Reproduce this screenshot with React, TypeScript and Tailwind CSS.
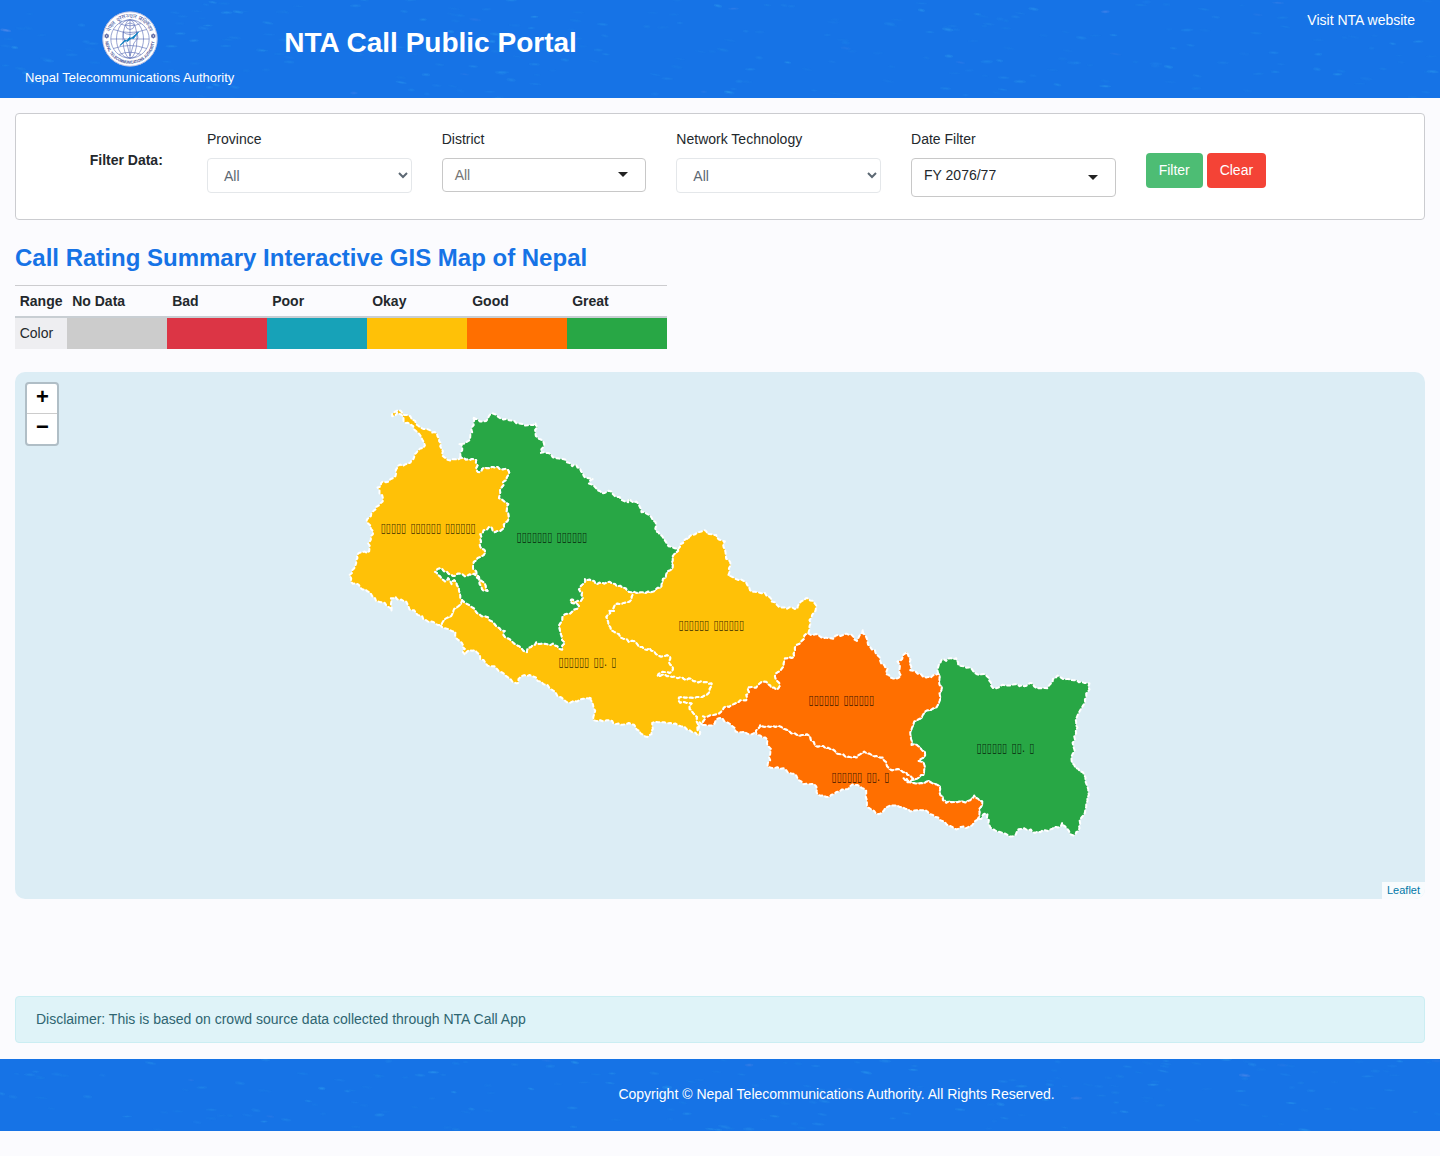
import React from "react";

type Point = [number, number];

/** Reads a traced outline drawn at three times map size, offset by its sheet's origin. */
function trace(originX: number, originY: number, data: string): Point[] {
  return data
    .trim()
    .split(/\s+/)
    .map((pair) => {
      const [x, y] = pair.split(",").map(Number);
      return [originX + 0.2 + x / 3, originY + 0.2 + y / 3] as Point;
    });
}

/** Adds small ragged steps between the vertices of a border. */
function roughen(points: Point[]): Point[] {
  const out: Point[] = [];
  points.forEach((p, i) => {
    out.push(p);
    const next = points[i + 1];
    if (!next) return;
    const dx = next[0] - p[0];
    const dy = next[1] - p[1];
    const k = Math.sin(p[0] * 12.9898 + p[1] * 78.233) * 0.22;
    out.push([p[0] + dx / 2 - dy * k, p[1] + dy / 2 + dx * k]);
  });
  return out;
}

const border = (x: number, y: number, data: string) => roughen(trace(x, y, data));
const back = (points: Point[]) => [...points].reverse();

const westOuter = border(
  340,
  400,
  "361,170 354,178 338,177 322,179 313,172 306,160 304,146 303,130 296,115 290,100 276,97 262,87 240,82 228,72 215,58 200,44 186,38 173,30 160,38 156,48 164,46 170,37 180,42 190,54 195,68 210,72 222,88 236,100 246,118 254,136 240,145 228,158 222,170 214,180 204,190 190,196 180,193 172,202 168,218 158,234 146,244 128,244 122,256 112,262 118,280 128,294 120,310 108,320 100,332 92,348 80,358 84,370 92,386 98,402 92,418 84,430 88,444 80,458 66,456 50,466 48,480 46,496 36,510 27,525 32,545 46,550 60,562 76,568 88,576 96,588 108,604 122,606 134,608 144,620 154,632 152,612 152,594 166,590 176,600 190,602 202,612 208,628 222,630 232,644 246,648 258,660 272,664 286,670 300,674"
);
const westLumbini = border(340, 400, "300,674 306,668 322,652 338,636 352,620 366,600");
const westKarnali = border(
  340,
  400,
  "366,600 360,586 356,570 350,556 342,540 334,552 324,534 314,544 304,536 292,524 284,515 292,506 306,506 320,514 334,524 346,526 360,520 374,528 388,522 402,520 410,532 418,544 424,558 430,572 442,572 436,556 426,544 416,530 408,514 398,494 408,480 420,470 436,456 424,446 418,432 420,416 420,402 430,390 446,380 456,384 464,396 480,392 492,382 496,366 504,358 504,340 500,326 504,312 492,304 476,294 480,278 484,262 488,246 498,240 504,224 504,210 488,208 472,200 456,200 440,204 426,206 418,216 410,212 412,196 408,180 396,176 384,178 372,174 361,170"
);
const karnaliOuter = border(
  450,
  400,
  "31,170 36,150 34,134 26,132 44,130 52,124 60,112 66,96 66,80 70,68 68,50 84,58 96,64 108,62 116,48 128,40 144,50 160,58 176,60 192,62 208,70 224,76 240,74 256,68 262,80 256,100 262,112 272,118 282,132 274,146 272,158 288,158 302,162 318,174 336,176 350,186 366,198 378,194 390,206 398,220 404,232 428,236 416,250 430,256 442,270 456,280 468,276 484,274 494,288 508,290 524,304 534,306 540,296 548,306 558,304 568,318 574,336 588,340 598,344 608,360 618,376 618,394 628,402 640,414 650,430 664,440 684,446"
);
const karnaliGandaki = border(
  450,
  400,
  "684,446 684,452 672,462 668,480 668,496 660,510 648,522 638,536 634,552 630,562 616,568 602,576 586,578 572,576 558,578 545,576"
);
const karnaliLumbini = border(
  450,
  400,
  "545,576 532,572 518,562 500,558 486,550 470,546 456,548 440,552 432,542 418,538 404,536 400,550 386,568 396,576 398,592 392,602 376,606 368,598 360,602 372,610 386,618 372,628 360,640 344,642 336,660 326,676 330,694 334,708 344,728 336,748 322,738 308,730 292,732 276,730 258,726 246,736 238,742 230,756 214,744 198,734 184,722 172,714 160,704 164,692 148,684 132,670 118,660 104,648 88,642 76,632 64,620 48,610 36,600"
);
const lumbiniOuter = border(
  430,
  570,
  "30,164 44,174 60,180 76,186 78,204 88,212 98,224 104,236 98,246 104,254 116,240 134,240 144,250 150,268 166,278 182,288 200,296 214,306 228,318 242,328 256,338 264,338 274,318 290,318 306,318 322,332 340,342 358,354 376,366 394,382 410,396 430,392 450,388 468,384 482,380 486,396 490,412 492,432 490,450 510,450 530,450 546,452 556,462 572,464 588,462 604,462 616,470 628,482 640,494 652,500 664,492 668,476 666,458 684,456 702,456 720,458 736,460 752,468 770,478 786,486 802,496"
);
const lumbiniGandaki = border(
  430,
  570,
  "802,496 810,486 802,480 804,464 800,440 788,428 778,416 784,400 768,398 750,398 746,382 764,382 782,382 800,380 816,380 832,372 838,356 844,340 830,336 812,334 796,334 784,326 768,330 756,322 742,324 726,320 710,318 696,314 682,318 690,308 706,306 718,308 728,296 720,284 716,272 720,260 702,258 684,256 672,244 658,234 642,238 626,230 614,214 596,216 580,206 566,192 550,184 540,170 534,156 528,140 540,128 536,120 552,122 552,108 562,100 580,98 598,94 604,80 605,66"
);
const gandakiOuter = border(
  600,
  520,
  "234,86 240,72 252,60 266,56 274,44 290,38 304,34 314,30 320,40 334,42 348,44 356,58 374,64 370,80 376,96 378,116 390,126 386,144 384,166 400,172 416,180 430,182 440,192 448,204 454,214 474,216 494,218 508,230 514,244 530,254 546,262 560,266 576,262 592,264 598,250 612,240 624,234 638,242 648,256 646,272 636,284 628,300 628,318 624,340"
);
const gandakiBagmati = border(
  600,
  520,
  "624,340 612,346 604,362 588,374 584,392 582,410 566,410 554,414 550,430 544,446 532,456 524,468 530,482 538,498 528,508 512,502 504,492 490,484 478,490 468,502 454,500 442,502 446,516 438,524 438,540 420,540 408,548 394,554 378,558 368,568 356,580 340,584 324,588 308,588 314,596 308,604"
);
const gandakiSouth = border(600, 520, "308,604 304,612 298,606 296,622 292,646");
const bagmatiSouth = border(
  600,
  520,
  "308,604 308,614 322,616 336,616 346,602 356,594 368,596 380,606 396,618 406,634 424,636 440,640 456,642 468,640"
);
const bagmatiMadhesh = border(
  690,
  620,
  "198,340 202,326 210,314 224,320 240,320 256,320 274,320 288,328 304,340 320,344 336,344 350,342 362,360 374,376 390,378 406,384 420,386 434,392 450,402 466,410 484,412 500,412 510,402 522,394 538,400 552,408 564,410 578,412 588,426 598,446 614,448 632,450 648,456 660,466 672,478"
);
const bagmatiOuter = border(
  690,
  620,
  "354,40 370,44 386,46 400,54 414,54 430,56 442,44 460,44 476,44 490,50 500,62 508,46 518,28 526,46 532,64 540,80 554,90 560,104 570,122 582,134 592,146 588,162 600,172 616,176 632,166 628,148 622,124 636,116 650,96 656,110 658,128 660,150 676,154 692,162 708,172 722,172 734,162 744,160"
);
const bagmatiEast = border(
  690,
  620,
  "744,160 748,176 748,194 754,210 750,230 744,252 730,264 712,270 698,284 684,298 668,316 660,336 662,354 664,374 680,374 692,386 704,396 700,412 684,422 700,428 702,446 700,464 688,470 672,478"
);
const eastMadhesh = border(
  860,
  640,
  "162,418 150,424 140,416 130,414 142,426 156,428 176,430 192,430 206,422 218,430 232,434 240,448 240,464 248,480 258,488 274,486 290,486 306,484 324,482 334,476 342,466 354,476 366,484 362,500 358,516 352,538"
);
const eastOuter = border(
  860,
  640,
  "234,100 234,80 240,70 246,56 258,62 272,54 288,54 294,66 296,76 312,78 326,82 340,94 350,102 364,102 380,108 386,120 392,136 408,144 420,138 436,136 452,136 466,132 478,138 492,138 504,132 518,130 530,144 546,144 562,144 572,130 578,116 592,106 608,116 624,116 640,120 656,126 672,128 688,130 688,148 678,160 674,178 670,194 660,210 650,230 648,246 652,262 648,280 644,298 640,320 638,340 634,358 642,374 654,386 668,396 676,412 678,430 684,446 686,464 682,482 678,500 674,518 664,532 660,550 658,564 648,576 640,586 626,572 614,558 606,548 594,562 582,560 570,568 554,570 540,576 524,578 512,568 498,568 484,566 470,574 458,588 442,584 428,578 410,574 396,566 388,556 386,540 382,522 370,522 364,536 352,538"
);
const madheshOuter = [
  ...border(
    860,
    640,
    "352,538 340,550 328,558 316,564 302,560 288,568 276,560 260,554 246,542 234,532 218,524 202,514 186,510 170,510 150,514 136,506 118,500 100,496 82,500 72,510 56,522 42,512 28,504 20,496"
  ),
  ...border(
    690,
    620,
    "530,540 528,520 522,506 508,498 496,494 480,498 464,508 448,514 432,522 418,530 400,526 382,522 380,508 372,492 356,492 340,492 326,480 318,466 304,460 288,450 270,446 252,444 232,438 240,420 240,402 242,386 230,370 226,352 210,346 198,340"
  ),
];

const YELLOW = "#ffc107";
const GREEN = "#28a745";
const ORANGE = "#ff6f00";

type Province = {
  name: string;
  /** Label words, each with its left edge and drawn width. */
  words: [string, number, number][];
  y: number;
  fill: string;
  ring: Point[];
};

const SIX = "▯▯▯▯▯▯";

const provinces: Province[] = [
  {
    name: "प्रदेश नं. १",
    words: [[SIX, 976.6, 30.6], ["▯▯.", 1011.4, 13.6], ["▯", 1029.2, 5.1]],
    y: 748,
    fill: GREEN,
    ring: [...eastOuter, ...back(eastMadhesh), ...back(bagmatiEast)],
  },
  {
    name: "प्रदेश नं. २",
    words: [[SIX, 831.6, 30.6], ["▯▯.", 866.4, 13.6], ["▯", 884.2, 5.1]],
    y: 777,
    fill: ORANGE,
    ring: [...madheshOuter, ...bagmatiMadhesh, ...eastMadhesh],
  },
  {
    name: "वागमती प्रदेश",
    words: [[SIX, 808.6, 30.6], [SIX, 843.4, 30.6]],
    y: 700,
    fill: ORANGE,
    ring: [...bagmatiOuter, ...bagmatiEast, ...back(bagmatiMadhesh), ...back(bagmatiSouth), ...back(gandakiBagmati)],
  },
  {
    name: "गण्डकी प्रदेश",
    words: [[SIX, 678.6, 30.6], [SIX, 713.4, 30.6]],
    y: 625,
    fill: YELLOW,
    ring: [...gandakiOuter, ...gandakiBagmati, ...gandakiSouth, ...lumbiniGandaki, ...back(karnaliGandaki)],
  },
  {
    name: "प्रदेश नं. ५",
    words: [[SIX, 558.6, 30.6], ["▯▯.", 593.4, 13.6], ["▯", 611.2, 5.1]],
    y: 662,
    fill: YELLOW,
    ring: [...lumbiniOuter, ...lumbiniGandaki, ...karnaliLumbini, ...back(westLumbini)],
  },
  {
    name: "कर्णाली प्रदेश",
    words: [["▯▯▯▯▯▯▯", 516.6, 35.7], [SIX, 556.6, 30.6]],
    y: 537,
    fill: GREEN,
    ring: [...karnaliOuter, ...karnaliGandaki, ...karnaliLumbini, ...westKarnali],
  },
  {
    name: "सुदूर पश्चिम प्रदेश",
    words: [["▯▯▯▯▯", 380.7, 25.5], [SIX, 410.4, 30.6], [SIX, 445, 30.6]],
    y: 528,
    fill: YELLOW,
    ring: [...westOuter, ...westLumbini, ...westKarnali],
  },
];

const toPath = (ring: Point[]) => "M" + ring.map(([x, y]) => `${x.toFixed(1)} ${y.toFixed(1)}`).join("L") + "Z";

/** Faint ripples over the blue bands. */
function Ripples({ height, seed }: { height: number; seed: number }) {
  const rand = (n: number) => {
    const v = Math.sin(n * 127.1 + seed * 311.7) * 43758.5453;
    return v - Math.floor(v);
  };
  const count = Math.round(height * 3);
  return (
    <svg className="pointer-events-none absolute inset-0 h-full w-full" viewBox={`0 0 1440 ${height}`} aria-hidden="true">
      {Array.from({ length: count }, (_, i) => {
        const x = rand(i * 5 + 1) * 1440;
        const y = rand(i * 5 + 2) * height;
        const glow = rand(i * 5 + 5) ** 3;
        return (
          <g key={i} fill={i % 23 === 0 ? "#6f95ee" : "#2fa0f0"} transform={`rotate(${rand(i * 7) * 14 - 2} ${x} ${y})`}>
            <ellipse cx={x} cy={y} rx={3 + rand(i * 5 + 3) * 3.5} ry={1 + rand(i * 5 + 4) * 0.8} opacity={0.06 + glow * 0.22} />
            <ellipse cx={x} cy={y} rx={1.5 + rand(i * 5 + 3) * 2} ry={0.7} opacity={0.06 + glow * 0.3} />
          </g>
        );
      })}
    </svg>
  );
}

function Logo() {
  return (
    <svg className="block h-14 w-14" viewBox="0 0 56 56" role="img" aria-label="Nepal Telecommunications Authority">
      <defs>
        <path id="ringTop" d="M7.100 25a21.100 21.100 0 0 1 41.800 0" />
        <path id="ringBottom" d="M3.200 28a24.800 24.800 0 0 0 49.600 0" />
      </defs>
      <circle cx="28" cy="28" r="27.6" fill="#fff" />
      <circle cx="28" cy="28" r="27.2" fill="none" stroke="#8c93cc" strokeWidth="0.6" />
      <g fill="none" stroke="#5468b4" strokeWidth="0.6">
        <circle cx="28" cy="28" r="19.2" />
        <ellipse cx="28" cy="28" rx="7" ry="19.2" />
        <ellipse cx="28" cy="28" rx="13.5" ry="19.2" />
        <path d="M28 8.8v38.4M8.8 28h38.4M11.5 18.5q16.5 6 33 0M11.5 37.500q16.5-6 33 0M17 12.500q11 4.500 22 0M17 43.500q11-4.500 22 0" />
        <path d="M23.500 14.500q4.500-5 9 0q-1 4-4.500 4t-4.500-4M21 21q7 5 14 0l1 6-4 5-4 13-3-12-4-7z" />
      </g>
      <path d="M18 34.500l5-5.500 1.500 1 3-3.500 1.500 1 7.500-6.500-5 6.500-2-.5-4 3.500-1.500-1z" fill="#087cc0" stroke="#087cc0" strokeWidth="0.8" />
      <path
        d="M4.700 22.700l1.900 3.400h-3.800zM4.700 27.300l1.900-3.400h-3.800zM51.300 22.700l1.900 3.400h-3.800zM51.300 27.300l1.900-3.400h-3.800z"
        fill="none"
        stroke="#3a488f"
        strokeWidth="0.7"
      />
      <text fill="#4c5c9f" fontSize="5.6" fontFamily="Liberation Sans, sans-serif">
        <textPath href="#ringTop" startOffset="50%" textAnchor="middle" textLength="52" lengthAdjust="spacingAndGlyphs">
          नेपाल दूरसञ्चार प्राधिकरण
        </textPath>
      </text>
      <text fill="#3c4a92" fontSize="4.4" fontWeight="bold" fontFamily="Liberation Sans, sans-serif">
        <textPath href="#ringBottom" startOffset="50%" textAnchor="middle" textLength="72" lengthAdjust="spacingAndGlyphs">
          NEPAL TELECOMMUNICATIONS AUTHORITY
        </textPath>
      </text>
    </svg>
  );
}

function NativeSelect() {
  return (
    <div className="flex h-[35px] items-center justify-between rounded-[4px] border border-[#e4e7ea] bg-white pl-4 pr-[2px] text-[#5c6873]">
      <span className="pt-px">All</span>
      <svg className="-mt-[2px] h-3 w-3" viewBox="0 0 12 12" fill="none" stroke="#5c6873" strokeWidth="2">
        <path d="M2 4l4 4 4-4" />
      </svg>
    </div>
  );
}

const Caret = () => <span className="h-0 w-0 border-x-[5px] border-t-[5px] border-x-transparent border-t-[#222]" />;

function Field({ label, children }: { label: string; children: React.ReactNode }) {
  return (
    <div className="w-[204.700px] shrink-0">
      <div className="mb-2 leading-[21px]">{label}</div>
      {children}
    </div>
  );
}

const ratings = [
  { label: "No Data", color: "bg-[#cccccc]" },
  { label: "Bad", color: "bg-[#dc3545]" },
  { label: "Poor", color: "bg-[#17a2b8]" },
  { label: "Okay", color: "bg-[#ffc107]" },
  { label: "Good", color: "bg-[#ff6f00]" },
  { label: "Great", color: "bg-[#28a745]" },
];

export default function App() {
  return (
    <div className="min-h-[1156px] bg-[#fbfbfe] font-['Liberation_Sans',Arial,sans-serif] text-sm leading-[21px] text-[#23282c]">
      <header className="relative flex h-[98px] items-start bg-[#1673e6] pl-[25px] pr-[25px] text-white">
        <Ripples height={98} seed={3} />
        <div className="relative flex flex-col items-center pt-[11px]">
          <Logo />
          <span className="mt-px text-[13px] leading-[20px]">Nepal Telecommunications Authority</span>
        </div>
        <h1 className="relative ml-[50px] mt-[26px] text-[28px] font-bold leading-[34px]">NTA Call Public Portal</h1>
        <a className="relative ml-auto mt-[10px]">Visit NTA website</a>
      </header>

      <main className="px-[15px] pt-[15px]">
        <section className="flex h-[107px] rounded border border-[#cbccd0] bg-white pl-[73.700px] pt-[15px]">
          <div className="w-[117.300px] shrink-0 pt-[21px] font-bold">Filter Data:</div>
          <div className="flex gap-[30px]">
            <Field label="Province">
              <NativeSelect />
            </Field>
            <Field label="District">
              <div className="flex h-[34px] items-center justify-between rounded border border-[#c8c8c8] pl-3 pr-[17px] text-[#757575]">
                <span>All</span>
                <span className="-mt-px flex">
                  <Caret />
                </span>
              </div>
            </Field>
            <Field label="Network Technology">
              <NativeSelect />
            </Field>
            <Field label="Date Filter">
              <div className="flex h-[39px] items-center justify-between rounded border border-[#c8c8c8] pl-3 pr-[17px]">
                <span className="-mt-[5px]">FY 2076/77</span>
                <Caret />
              </div>
            </Field>
            <div className="flex gap-1 pt-6 text-white">
              <button className="h-[35px] w-[57px] rounded-[4px] bg-[#4dbd74]">Filter</button>
              <button className="h-[35px] w-[59.300px] rounded-[4px] bg-[#f44336]">Clear</button>
            </div>
          </div>
        </section>

        <h2 className="mt-[23px] text-2xl font-bold leading-[29px] text-[#1673e6]">
          Call Rating Summary Interactive GIS Map of Nepal
        </h2>
        <div className="mt-[13px] grid w-[652px] grid-cols-[52px_repeat(6,100px)]">
          <div className="h-[33px] border-b-2 border-t border-[#c8ced3] border-t-[#cccccf] pl-[4.700px] pt-[5px] font-bold">Range</div>
          {ratings.map((r) => (
            <div
              key={r.label}
              className="h-[33px] border-b-2 border-t border-[#c8ced3] border-t-[#cccccf] pl-[5.200px] pt-[5px] font-bold"
            >
              {r.label}
            </div>
          ))}
          <div className="h-[31px] bg-[#eeeef1] pl-[4.700px] pt-[5px]">Color</div>
          {ratings.map((r) => (
            <div key={r.label} className={r.color} />
          ))}
        </div>

        <section className="relative mt-[23px] h-[527px] overflow-hidden rounded-[10px] bg-[#dcedf5]">
          <svg className="block h-full w-full" viewBox="15 372 1410 527">
            {provinces.map((p) => (
              <path
                key={p.name}
                d={toPath(p.ring)}
                fill={p.fill}
                stroke="#fff"
                strokeWidth="2"
                strokeDasharray="3"
                strokeLinecap="round"
                strokeLinejoin="round"
              />
            ))}
            {provinces.map((p) => (
              <g key={p.name} aria-label={p.name} fontSize="13" fill="#000" fillOpacity="0.8" fontFamily="DejaVu Sans, sans-serif">
                {p.words.map(([word, x, width]) => (
                  <text key={x} x={x} y={p.y + 4} textLength={width} lengthAdjust="spacingAndGlyphs">
                    {word}
                  </text>
                ))}
              </g>
            ))}
          </svg>
          <div className="absolute left-[10px] top-[10px] w-[34px] overflow-hidden rounded border-2 border-[#b0bec6] bg-white text-center font-bold text-black">
            <div className="h-[30px] border-b border-[#ccc] pl-px text-[22px] leading-[26px]">+</div>
            <div className="h-[30px] pl-px text-[22px] leading-[26px]">−</div>
          </div>
          <div className="absolute bottom-0 right-0 h-[17px] bg-[#f8fbfd] px-[5px] text-[11px] leading-[17px] text-[#0078a8]">
            Leaflet
          </div>
        </section>

        <div className="mt-[97px] h-[47px] rounded border border-[#cbeef3] bg-[#dff3f8] pl-5 pt-3 text-[#2e6571]">
          Disclaimer: This is based on crowd source data collected through NTA Call App
        </div>
      </main>

      <footer className="relative mt-4 h-[72px] bg-[#1673e6] pl-[233px] pt-[25px] text-center text-white">
        <Ripples height={72} seed={8} />
        <p className="relative">Copyright © Nepal Telecommunications Authority. All Rights Reserved.</p>
      </footer>
    </div>
  );
}
